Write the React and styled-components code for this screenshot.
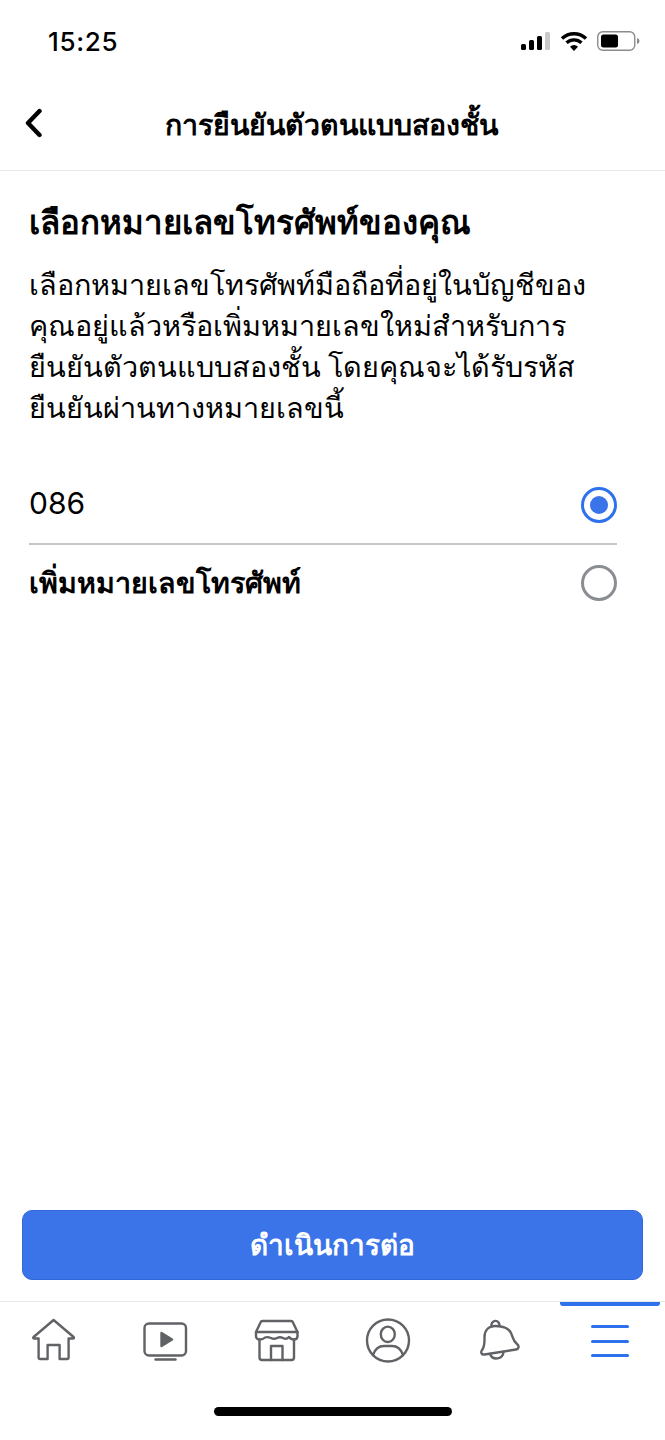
import React from "react";
import styled, { createGlobalStyle } from "styled-components";

const GlobalStyle = createGlobalStyle`
    html, body {
        margin: 0;
        padding: 0;
        background: #fff;
    }
    body {
        font-family: "Liberation Sans", "Noto Sans", sans-serif;
    }
`

const App = () => {
    return (
        <StPage>
            <GlobalStyle />
            <StStatusBar>
                <StTime>15:25</StTime>
                <StStatusIcons>
                    <svg width="30" height="20" viewBox="0 0 30 20">
                        <rect x="0" y="13" width="5" height="6" rx="1.5" fill="#000" />
                        <rect x="8" y="9" width="5" height="10" rx="1.5" fill="#000" />
                        <rect x="16" y="5" width="5" height="14" rx="1.5" fill="#000" />
                        <rect x="24" y="1" width="5" height="18" rx="1.5" fill="#c9c9c9" />
                    </svg>
                    <svg width="28" height="20" viewBox="0 0 28 20" fill="none" stroke="#000" strokeWidth="3.4">
                        <path d="M2 7.5a17.500 17.500 0 0 1 24 0" />
                        <path d="M6.500 11.800a11 11 0 0 1 15 0" />
                        <path d="M14 20l-4-4.200a5.600 5.600 0 0 1 8 0z" fill="#000" stroke="none" />
                    </svg>
                    <svg width="43" height="22" viewBox="0 0 43 22">
                        <rect x="0.75" y="1.75" width="37" height="18.500" rx="5" fill="none" stroke="#8c8c8c" strokeWidth="1.4" />
                        <rect x="4" y="4.500" width="17" height="13" rx="2.500" fill="#000" />
                        <path d="M40 8v6a3 3 0 0 0 2.500-3 3 3 0 0 0-2.500-3z" fill="#8c8c8c" />
                    </svg>
                </StStatusIcons>
            </StStatusBar>

            <StHeader>
                <StBack>
                    <svg width="20" height="30" viewBox="0 0 20 30" fill="none" stroke="#000" strokeWidth="4.400" strokeLinecap="round" strokeLinejoin="round">
                        <path d="M15.500 3 L4 15 L15.500 27" />
                    </svg>
                </StBack>
                <StHeaderTitle>การยืนยันตัวตนแบบสองชั้น</StHeaderTitle>
            </StHeader>

            <StContent>
                <StTitle>เลือกหมายเลขโทรศัพท์ของคุณ</StTitle>
                <StDesc>
                    เลือกหมายเลขโทรศัพท์มือถือที่อยู่ในบัญชีของ<br />
                    คุณอยู่แล้วหรือเพิ่มหมายเลขใหม่สำหรับการ<br />
                    ยืนยันตัวตนแบบสองชั้น โดยคุณจะได้รับรหัส<br />
                    ยืนยันผ่านทางหมายเลขนี้
                </StDesc>
                <StOption $line>
                    <StPhone>086</StPhone>
                    <StRadio $on />
                </StOption>
                <StOption>
                    <StAddPhone>เพิ่มหมายเลขโทรศัพท์</StAddPhone>
                    <StRadio />
                </StOption>
            </StContent>

            <StFooter>
                <StButton>ดำเนินการต่อ</StButton>
            </StFooter>

            <StTabBar>
                <StTab>
                    <StIcon width="46" height="44" viewBox="0 0 46 44">
                        <path d="M21.600 1 L41.600 18 Q42.600 19.500 40.800 19.500 H36.600 V38.500 Q36.600 40 35 40 H27.600 V26 H15.600 V40 H8.200 Q6.600 40 6.600 38.500 V19.500 H2.400 Q0.600 19.500 1.600 18 Z" />
                    </StIcon>
                </StTab>
                <StTab>
                    <StIcon width="46" height="44" viewBox="0 0 46 44">
                        <rect x="1.500" y="4.500" width="41.500" height="32" rx="4.500" />
                        <path d="M12.500 40.500 H32.500" />
                        <path d="M18.500 14 L29 20.500 L18.500 27 Z" fill="#606266" />
                    </StIcon>
                </StTab>
                <StTab>
                    <StIcon width="46" height="44" viewBox="0 0 46 44">
                        <path d="M8.500 2 H37 Q38.500 2 39 3.500 L43.500 13 V17 Q43.500 20.500 40 20.500 Q36.800 20.500 35 18 Q32.500 21 29 19 Q26 17.500 23 19 Q20 20.500 17 19 Q13.500 17.500 11 18.500 Q9 20.500 6 20.500 Q2 20.500 2 17 V13 L6.500 3.500 Q7 2 8.500 2 Z" />
                        <path d="M2 13 H43.500" />
                        <path d="M5.500 20.500 V38.500 Q5.500 41 8 41 H37.500 Q40 41 40 38.500 V20.500" />
                        <path d="M17 41 V27 H28.500 V41" />
                    </StIcon>
                </StTab>
                <StTab>
                    <StIcon width="46" height="46" viewBox="0 0 46 46">
                        <circle cx="23" cy="21.500" r="21" />
                        <ellipse cx="22.800" cy="15.300" rx="7" ry="7.700" />
                        <path d="M8 36 Q11 27 19 27 H27 Q35 27 38 36" />
                    </StIcon>
                </StTab>
                <StTab>
                    <StIcon width="44" height="46" viewBox="0 0 44 46">
                        <path d="M14.800 7.500 a4 4 0 1 1 7.500 -0.500" />
                        <path d="M18.500 7 C11 7 7.500 12 7.500 18 C7.500 24 8 27 5 31 C3.500 33.500 4.500 36 7.500 35.500 L39 30.500 C42 30 42.500 27 40 25 C35.500 21.500 36 18 34 14 C31.500 9 26 7 18.500 7 Z" />
                        <path d="M13 35 a7 7 0 0 0 13.500 -2" />
                    </StIcon>
                </StTab>
                <StActiveTab>
                    <StActiveBar />
                    <StBurger>
                        <span />
                        <span />
                        <span />
                    </StBurger>
                </StActiveTab>
            </StTabBar>

            <StHomeRow>
                <StHomeIndicator />
            </StHomeRow>
        </StPage>
    )
}

export default App;

const StPage = styled.div`
    width: 665px;
    height: 1440px;
    display: flex;
    flex-direction: column;
    background: #fff;
    color: #000;
    overflow: hidden;
`

const StStatusBar = styled.div`
    height: 82px;
    padding: 0 25px 0 48px;
    display: flex;
    justify-content: space-between;
    align-items: center;
    box-sizing: border-box;
`

const StTime = styled.div`
    font-size: 26px;
    font-weight: 500;
    font-family: "Inter", "Liberation Sans", sans-serif;
    letter-spacing: 0.7px;
`

const StStatusIcons = styled.div`
    display: flex;
    align-items: center;
    gap: 9px;
`

const StHeader = styled.div`
    height: 89px;
    box-sizing: border-box;
    border-bottom: 1px solid #e8e8e8;
    display: flex;
    align-items: center;
    justify-content: center;
    position: relative;
    padding-bottom: 3px;
`

const StBack = styled.div`
    position: absolute;
    left: 24px;
    top: 26px;
    display: flex;
`

const StHeaderTitle = styled.div`
    font-family: "Noto Sans", "Liberation Sans", sans-serif;
    font-size: 28.5px;
    font-weight: 700;
    margin-right: 2px;
`

const StContent = styled.div`
    flex: 1;
    padding: 28px 48px 0 29px;
    display: flex;
    flex-direction: column;
`

const StTitle = styled.div`
    font-family: "Noto Sans", "Liberation Sans", sans-serif;
    font-size: 33px;
    font-weight: 700;
    line-height: 46px;
`

const StDesc = styled.div`
    font-family: "Noto Sans", "Liberation Sans", sans-serif;
    font-size: 28.8px;
    line-height: 41px;
    margin-top: 18px;
    white-space: nowrap;
`

const StOption = styled.div`
    height: ${(props) => (props.$line ? "78px" : "76px")};
    margin-top: ${(props) => (props.$line ? "40px" : "0")};
    box-sizing: border-box;
    display: flex;
    align-items: center;
    justify-content: space-between;
    border-bottom: ${(props) => (props.$line ? "2px solid #c4c6c9" : "none")};
`

const StPhone = styled.div`
    font-family: "Inter", "Liberation Sans", sans-serif;
    font-size: 30px;
    margin-bottom: 4px;
`

const StAddPhone = styled.div`
    font-family: "Noto Sans", "Liberation Sans", sans-serif;
    font-size: 28.6px;
    font-weight: 700;
`

const StRadio = styled.div`
    width: 36px;
    height: 36px;
    box-sizing: border-box;
    border-radius: 50%;
    border: 3.5px solid ${(props) => (props.$on ? "#2d71ec" : "#8a8d91")};
    display: flex;
    align-items: center;
    justify-content: center;
    &::after {
        content: "";
        width: 18px;
        height: 18px;
        border-radius: 50%;
        background: ${(props) => (props.$on ? "#3a74e8" : "transparent")};
    }
`

const StFooter = styled.div`
    padding: 0 22px 21px 22px;
`

const StButton = styled.div`
    height: 70px;
    box-sizing: border-box;
    border-radius: 10px;
    border: 1px solid #3068d8;
    background: #3a74e8;
    color: #fff;
    font-family: "Noto Sans", "Liberation Sans", sans-serif;
    font-size: 28px;
    font-weight: 700;
    display: flex;
    align-items: center;
    justify-content: center;
`

const StTabBar = styled.div`
    height: 97px;
    box-sizing: border-box;
    border-top: 1px solid #e8e8e8;
    display: grid;
    grid-template-columns: repeat(6, 1fr);
`

const StTab = styled.div`
    display: flex;
    justify-content: center;
    padding-top: 17px;
`

const StIcon = styled.svg`
    overflow: visible;
    fill: none;
    stroke: #606266;
    stroke-width: 2.4;
    stroke-linecap: round;
    stroke-linejoin: round;
`

const StActiveTab = styled(StTab)`
    position: relative;
`

const StActiveBar = styled.div`
    position: absolute;
    top: 0;
    left: 6px;
    right: 5px;
    height: 4px;
    border-radius: 0 0 3px 3px;
    background: #2d71ec;
`

const StBurger = styled.div`
    width: 38px;
    height: 32px;
    margin-top: 6px;
    display: flex;
    flex-direction: column;
    justify-content: space-between;
    & > span {
        display: block;
        height: 3px;
        border-radius: 2px;
        background: #2d71ec;
    }
`

const StHomeRow = styled.div`
    height: 42px;
    display: flex;
    justify-content: center;
    padding-top: 9px;
    box-sizing: border-box;
`

const StHomeIndicator = styled.div`
    width: 238px;
    height: 9px;
    border-radius: 5px;
    background: #000;
`
